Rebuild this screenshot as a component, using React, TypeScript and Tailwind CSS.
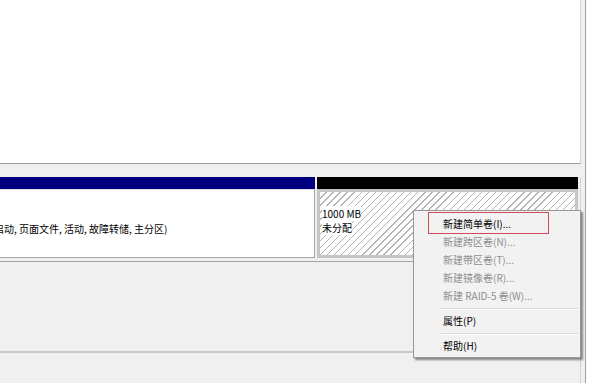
import React from 'react'

const font = { fontFamily: '"Noto Sans CJK SC", "Noto Sans", sans-serif' }

interface MenuItem {
  label: string
  disabled?: boolean
}

const volumeItems: MenuItem[] = [
  { label: '新建简单卷(I)...' },
  { label: '新建跨区卷(N)...', disabled: true },
  { label: '新建带区卷(T)...', disabled: true },
  { label: '新建镜像卷(R)...', disabled: true },
  { label: '新建 RAID-5 卷(W)...', disabled: true },
]

function Item({ label, disabled }: MenuItem) {
  return (
    <div className={'h-[18px] flex items-center pl-[29px] text-[10px] ' + (disabled ? 'text-[#8e8e8e]' : 'text-black')}>
      {label}
    </div>
  )
}

function Separator() {
  return (
    <div className="h-[7px] flex flex-col justify-center pl-[27px] pr-[2px]">
      <div className="h-px bg-[#d9d9d9]" />
      <div className="h-px bg-white" />
    </div>
  )
}

function ContextMenu() {
  return (
    <div className="absolute left-[413px] top-[210px] w-[168px] h-[148px] bg-[#f2f2f2] border border-[#979797] shadow-[2px_2px_2px_rgba(0,0,0,0.45)] pt-[4px]">
      {/* red annotation box round the first item */}
      <div className="absolute left-[14px] top-[1px] w-[121px] h-[22px] border border-[#d24a55]" />
      {volumeItems.map(it => <Item key={it.label} {...it} />)}
      <Separator />
      <Item label="属性(P)" />
      <Separator />
      <Item label="帮助(H)" />
    </div>
  )
}

export default function App() {
  return (
    <div className="relative w-[605px] h-[383px] bg-white overflow-hidden leading-[14px]" style={font}>
      <div className="w-[586px] h-full bg-[#f0f0f0] border-r border-[#a0a0a0] flex flex-col">
        {/* volume list (top pane) */}
        <div className="w-[581px] h-[164px] bg-white border-r border-[#d4d4d4] border-b border-b-[#a0a0a0]" />

        {/* disk map */}
        <div className="w-[581px] border-r border-[#d4d4d4] mt-[13px] flex gap-[2px]">
          <div className="w-[315px] flex flex-col">
            <div className="h-[12px] bg-[#00007f]" />
            <div className="h-[69px] bg-white border-r border-b border-[#a6a6a6] border-t border-t-[#e2e2e2] pt-[32px] text-[10px] text-black whitespace-nowrap overflow-hidden">
              <span className="ml-[-6px]">启动, 页面文件, 活动, 故障转储, 主分区)</span>
            </div>
          </div>
          <div className="w-[261px] flex flex-col">
            <div className="h-[12px] bg-black" />
            <div className="h-[69px] border-[3px] border-[#c6c6c6] bg-[repeating-linear-gradient(135deg,#ffffff_0px,#ffffff_4px,#b4b4b4_4px,#b4b4b4_5px)] pt-[15px] pl-[2px] text-[10px] text-black">
              <div><span className="bg-white">1000 MB</span></div>
              <div><span className="bg-white">未分配</span></div>
            </div>
          </div>
        </div>

        <div className="w-[581px] h-[4px] border-r border-[#d4d4d4] border-b border-b-[#a6a6a6]" />
        <div className="w-[581px] h-[91px] border-r border-[#d4d4d4] border-b-2 border-b-[#c8c8c8]" />
        <div className="w-[581px] flex-1 border-r border-[#d4d4d4]" />
      </div>

      <ContextMenu />
    </div>
  )
}
